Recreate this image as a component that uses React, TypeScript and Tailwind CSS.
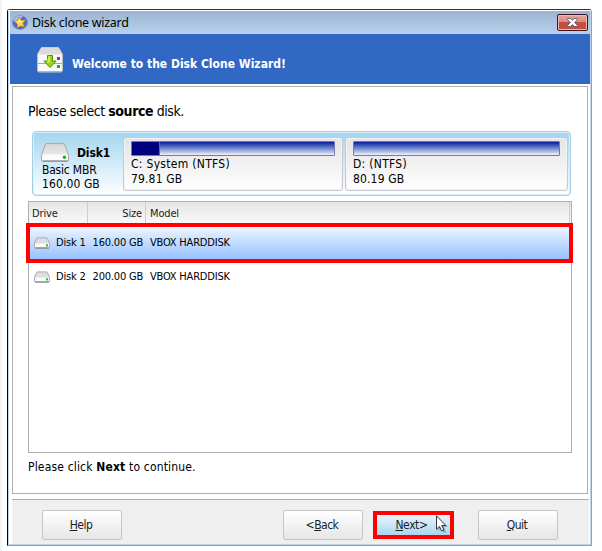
import type { ReactNode } from "react";

type Partition = {
  label: string;
  size: string;
  used: string;
  className: string;
};

const partitions: Partition[] = [
  { label: "C: System (NTFS)", size: "79.81 GB", used: "w-7 border-r border-[#6464a0]", className: "w-[220px]" },
  { label: "D: (NTFS)", size: "80.19 GB", used: "w-0", className: "w-[223px]" },
];

const disks = [
  { name: "Disk 1", size: "160.00 GB", model: "VBOX HARDDISK", selected: true },
  { name: "Disk 2", size: "200.00 GB", model: "VBOX HARDDISK", selected: false },
];

const DriveIcon = ({ className }: { className: string }) => (
  <svg className={className} viewBox="0 0 28 19" preserveAspectRatio="none">
    <defs>
      <linearGradient id="driveTop" x1="0" y1="0" x2="0" y2="1">
        <stop offset="0" stopColor="#d6d6d6" />
        <stop offset="1" stopColor="#f2f2f2" />
      </linearGradient>
    </defs>
    <path
      d="M6 .6h16q1.4 0 1.8 1.2l3.3 9q.4 1 .4 2v4q0 1.6-1.5 1.6H2q-1.5 0-1.5-1.6v-4q0-1 .4-2l3.3-9Q4.6.6 6 .6z"
      fill="url(#driveTop)"
      stroke="#a2a2a2"
      strokeWidth=".9"
    />
    <path d="M1.1 12.4q.2-.9 1.2-.9h23.4q1 0 1.2.9v4.4q0 1-1 1H2.1q-1 0-1-1z" fill="#fbfbfb" />
    <path d="M1.5 17.9h25" stroke="#858585" strokeWidth="1.1" />
    <circle cx="23.4" cy="14.3" r="1.7" fill="#16b51e" />
  </svg>
);

const SmallDriveIcon = () => (
  <svg className="ml-[5px] h-3 w-4" viewBox="0 0 16 12">
    <path
      d="M3.6.9h8.8q.8 0 1.1.8l1.8 4.1q.2.4.2.9v3.1q0 1.2-1.2 1.2H1.7Q.5 11 .5 9.800V6.700q0-.5.2-.9l1.800-4.100Q2.800.9 3.600.9z"
      fill="#dedede"
      stroke="#9b9b9b"
      strokeWidth=".8"
    />
    <path d="M1 6.500h14v3.700H1z" fill="#fcfcfc" />
    <path d="M1.200 11h13.600" stroke="#707070" strokeWidth=".9" />
    <path d="M12 7.200h2v2.200h-2z" fill="#35bd3a" />
  </svg>
);

const AppIcon = () => (
  <svg className="h-[15px] w-4" viewBox="0 0 16 15">
    <ellipse cx="8" cy="7.500" rx="7.600" ry="6.900" fill="#5368ca" stroke="#8291bf" strokeWidth=".7" />
    <path d="M1 6C2 1 8 0 11 1.500L4 8z" fill="#a9d4f6" opacity=".8" />
    <path
      d="M7.300 1.800l1.900 3.400 4.400-.2-2.700 3.300 1.700 3.900-4-1.200-3.600 2.100.5-4.100L2 6.400l3.900-.9z"
      fill="#ffd747"
      stroke="#bd7914"
      strokeWidth=".7"
    />
    <path d="M7.300 3.500l1.100 2.400 2.500.1L7 7.200 4 6.700l2.500-.8z" fill="#fff2aa" />
  </svg>
);

const CloneIcon = () => (
  <svg className="h-[26px] w-[26px]" viewBox="0 0 26 26">
    <path d="M4.500.5h17L25.300 7v16.500q0 1.500-1.500 1.500H2.200Q.7 25 .7 23.500V7z" fill="#fafafa" stroke="#c9c9c9" />
    <path d="M4.600.8h16.800L25 7.500H1z" fill="#dcdcdc" />
    <path d="M1 16.500h24" stroke="#a5a5a5" />
    <path d="M1.500 24.500h23" stroke="#b5b5b5" />
    <path d="M10.500 8.500h5V14h3.700L13 20.500 6.800 14h3.700z" fill="#9bd511" stroke="#568e12" />
    <path d="M11.300 9.200h1.500v6.300H10z" fill="#d3f25c" />
    <path d="M20 10h3v3h-3z" fill="#b816b4" />
    <path d="M20 18h3v3h-3z" fill="#0db22b" />
  </svg>
);

const CloseIcon = () => (
  <svg className="h-[9px] w-[11px]" viewBox="0 0 11 9">
    <path
      d="M.7.5h3.100l1.700 1.900L7.200.5h3.100v1.200L7.700 4.500l2.600 2.800v1.200H7.200L5.500 6.600 3.800 8.500H.7V7.300l2.600-2.800L.7 1.700z"
      fill="#fff"
      stroke="#59596c"
      strokeWidth=".9"
    />
  </svg>
);

const Cursor = () => (
  <svg className="absolute left-[59px] top-0 h-[19px] w-3" viewBox="0 0 12 19">
    <path d="M2 3v13l3-3 3 5 2-1-2-5h4z" fill="#000" opacity=".25" />
    <path d="M.5.8v13.400l3-2.800 2.100 4.600 2.200-1-2.100-4.500h4.100z" fill="#fff" stroke="#222" strokeWidth=".9" />
  </svg>
);

const Button = ({ children, className = "" }: { children: ReactNode; className?: string }) => (
  <button
    type="button"
    className={`h-[30px] w-20 rounded-[2px] border border-[#c5c5c5] bg-linear-to-b from-white to-[#e6e6e6] pr-0.5 text-[12px] leading-[28px] tracking-[-0.5px] text-[#1c1c24] ${className}`}
  >
    {children}
  </button>
);

const App = () => {
  return (
    <div className="h-[551px] w-[602px] overflow-hidden border-l-2 border-[#eff4f8] bg-white pl-[5px] pt-[9px] font-['DejaVu_Sans_Condensed','DejaVu_Sans',sans-serif] text-black">
      <div className="flex h-[537px] w-[585px] flex-col rounded-t-[3px] border border-b-[#34c0e2] border-l-black border-r-[#4cbce8] border-t-[#2d3238]">
        <div className="flex h-[535px] flex-col border-x border-b border-[#bdd4ea] border-t border-t-white pl-px">
          <header className="flex h-[23px] shrink-0 items-center bg-linear-to-b from-[#9ab4d2] to-[#b9d1ea] pl-0.5 pr-0.5">
            <AppIcon />
            <h1 className="ml-1 flex-1 whitespace-nowrap font-['Noto_Sans',sans-serif] text-[12.5px] leading-[22px] tracking-[-0.3px]">
              Disk clone wizard
            </h1>
            <button
              type="button"
              className="flex h-[17px] w-[31px] items-center justify-center rounded-[2px] border border-[#431622] bg-linear-to-b from-[#eda29b] from-0% via-[#dc887f] via-48% to-[#cf7465] shadow-[inset_0_0_0_1px_#efb9b3,inset_0_-8px_0_#c4503c]"
            >
              <CloseIcon />
            </button>
          </header>

          <div className="flex h-[50px] shrink-0 bg-[#3068c4] pl-[27px] pt-[13px]">
            <CloneIcon />
            <h2 className="ml-[9px] mt-[9px] whitespace-nowrap text-[12px] font-bold leading-4 text-white">
              Welcome to the Disk Clone Wizard!
            </h2>
          </div>

          <main className="ml-0.5 mt-0.5 flex h-[408px] w-[576px] shrink-0 flex-col border border-[#afafaf] bg-white pl-[15px] pt-4">
            <p className="whitespace-nowrap text-[14px] leading-4 tracking-[-0.43px]">
              Please select <b>source</b> disk.
            </p>

            <section className="ml-1 mt-3 flex h-[65px] w-[539px] rounded-[4px] border border-[#a5cfe3] bg-linear-to-b from-[#a2d5f0] to-white pt-[5px] shadow-[inset_0_0_0_1px_#d8eefa]">
              <div className="w-[90px] pl-[9px] pt-1.5">
                <div className="flex h-5">
                  <DriveIcon className="-ml-px h-[19px] w-7" />
                  <b className="ml-2 pt-px text-[12px] leading-[18px] tracking-[-0.1px]">Disk1</b>
                </div>
                <p className="whitespace-nowrap text-[12px] leading-[14px] tracking-[-0.2px]">Basic MBR</p>
                <p className="whitespace-nowrap text-[12px] leading-[14px] tracking-[0.1px]">160.00 GB</p>
              </div>
              <div className="flex gap-0.5">
                {partitions.map((p) => (
                  <div
                    key={p.label}
                    className={`h-[54px] rounded-[3px] border border-[#c9c9ce] bg-linear-to-b from-[#e4e4e4] to-white px-[7px] pt-[3px] shadow-[inset_0_0_0_1px_#f3f3f3] ${p.className}`}
                  >
                    <div className="h-[15px] rounded-[1px] border border-[#7777ac] bg-linear-to-b from-[#10109c] to-[#f4f1fa]">
                      <div className={`h-[13px] bg-[#00007f] ${p.used}`} />
                    </div>
                    <p className="mt-px whitespace-nowrap text-[12px] leading-[15px] tracking-[0.3px]">{p.label}</p>
                    <p className="whitespace-nowrap text-[12px] leading-[15px] tracking-[0.15px]">{p.size}</p>
                  </div>
                ))}
              </div>
            </section>

            <section className="relative mt-[5px] h-[252px] w-[544px] border border-[#afafaf] text-[11px]">
              <div className="flex h-[22px] bg-linear-to-b from-[#e5e5e5] to-[#fafafa] leading-[23px] tracking-[-0.15px] text-[#1c1c24]">
                <span className="w-[59px] border-r border-[#cfcfcf] pl-[3px]">Drive</span>
                <span className="w-[58px] border-r border-[#cfcfcf] pr-[3px] text-right">Size</span>
                <span className="mr-px flex-1 border-r border-[#cfcfcf] pl-1">Model</span>
              </div>
              {disks.map((d) => (
                <div
                  key={d.name}
                  className={`flex h-[34px] items-center whitespace-nowrap tracking-[-0.2px] ${
                    d.selected ? "mt-0.5 bg-linear-to-b from-[#eff7ff] to-[#94bfff]" : ""
                  }`}
                >
                  <SmallDriveIcon />
                  <span className="ml-1.5 w-[30px]">{d.name}</span>
                  <span className="w-[57px] text-right">{d.size}</span>
                  <span className="ml-[7px]">{d.model}</span>
                </div>
              ))}
              <div className="absolute -left-[3px] top-[21px] h-10 w-[547px] border-4 border-[#ff0000]" />
            </section>

            <p className="mt-1.5 whitespace-nowrap text-[12px] leading-4 tracking-[0.17px]">
              Please click <b>Next</b> to continue.
            </p>
          </main>

          <footer className="ml-0.5 mt-[5px] flex h-[45px] w-[577px] border-t border-[#afafaf] bg-[#efefef] pl-[30px] pt-2.5">
            <Button>
              <u>H</u>elp
            </Button>
            <Button className="ml-[161px]">
              &lt;<u>B</u>ack
            </Button>
            <div className="relative ml-2.5 mt-px h-7 w-[81px] border-4 border-[#ff0000] bg-linear-to-b from-[#e9f6fd] to-[#a8d6ee] text-center text-[12px] leading-5 tracking-[-0.4px] text-[#1c1c24]">
              <button type="button" className="pr-1">
                <u>N</u>ext&gt;
              </button>
              <Cursor />
            </div>
            <Button className="ml-6">
              <u>Q</u>uit
            </Button>
          </footer>
        </div>
      </div>
    </div>
  );
};

export default App;
